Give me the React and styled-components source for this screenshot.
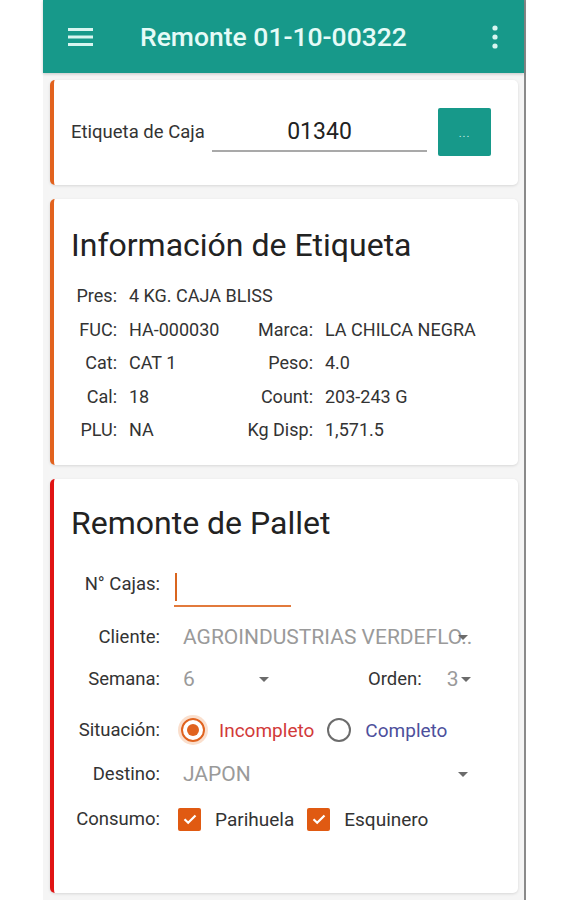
import React from 'react'
import styled, { createGlobalStyle } from 'styled-components'

const GlobalStyle = createGlobalStyle`
  html, body {
    margin: 0;
    padding: 0;
    background: #ffffff;
  }
  body {
    font-family: Roboto, "Noto Sans", "Liberation Sans", sans-serif;
    color: #333;
  }
`

// layout
const Page = styled.div`
  display: flex;
  width: 568px;
  height: 900px;
  overflow: hidden;
`

const Phone = styled.div`
  margin-left: 43px;
  width: 481px;
  border-right: 2px solid #8a8a8a;
  background: #f5f5f5;
  display: flex;
  flex-direction: column;
`

// app bar
const AppBar = styled.header`
  height: 73px;
  flex-shrink: 0;
  background: #17998a;
  display: flex;
  align-items: center;
  padding: 0 6px 0 25px;
  box-shadow: 0 1px 3px rgba(0, 0, 0, 0.2);
  color: #e6fbf7;
`

const Title = styled.h1`
  flex: 1;
  margin: 0 0 0 47px;
  font-size: 26.5px;
  font-weight: 500;
`

const IconBtn = styled.div`
  width: ${p => p.w}px;
  display: flex;
  align-items: center;
  justify-content: center;
`

const Content = styled.main`
  display: flex;
  flex-direction: column;
  gap: 14px;
  padding: 7px 6px 0 7px;
`

const Card = styled.section`
  position: relative;
  background: #fff;
  border-radius: 5px;
  box-shadow: 0 1px 3px rgba(0, 0, 0, 0.12);
  border-left: 4px solid ${p => p.accent};
  padding: ${p => p.pad};
  min-height: ${p => p.minH || 0}px;
  box-sizing: border-box;
`

const CardTitle = styled.h2`
  margin: 0;
  font-size: 32px;
  font-weight: 400;
  color: #222;
`

// card 1
const TagRow = styled.div`
  display: flex;
  align-items: center;
`

const TagLabel = styled.span`
  font-size: 18.5px;
  color: #333;
  width: 141px;
  white-space: nowrap;
`

const TagInput = styled.div`
  width: 215px;
  height: 40px;
  border-bottom: 2px solid #a9a9a9;
  display: flex;
  align-items: center;
  justify-content: center;
  font-size: 23px;
  color: #222;
  box-sizing: border-box;
`

const SquareButton = styled.button`
  margin-left: 11px;
  width: 53px;
  height: 48px;
  border: none;
  border-radius: 2px;
  background: #17998a;
  color: #cdeee9;
  font-size: 11px;
  font-family: inherit;
  letter-spacing: 1px;
  padding-top: 4px;
`

// card 2
const InfoGrid = styled.div`
  display: grid;
  grid-template-columns: 46px 96px 76px auto;
  column-gap: 12px;
  margin-top: 22px;
  font-size: 18px;
  color: #333;
`

const InfoLabel = styled.span`
  text-align: right;
  height: 33.5px;
  line-height: 20px;
  white-space: nowrap;
`

const InfoValue = styled.span`
  white-space: nowrap;
  line-height: 20px;
  grid-column: ${p => (p.wide ? '2 / -1' : 'auto')};
`

// card 3
const Form = styled.div`
  display: flex;
  flex-direction: column;
  margin-top: 27px;
`

const FormRow = styled.div`
  display: flex;
  align-items: center;
  height: ${p => p.h || 30}px;
  margin-top: ${p => p.mt || 0}px;
`

const FormLabel = styled.span`
  width: 90px;
  flex-shrink: 0;
  text-align: right;
  font-size: 18.5px;
  color: #333;
  margin: 0 14px ${p => p.lift || 0}px -1px;
  white-space: nowrap;
`

const CountInput = styled.div`
  position: relative;
  width: 117px;
  height: 36px;
  border-bottom: 2px solid #e27a3c;
`

const Caret = styled.span`
  position: absolute;
  left: 1px;
  top: 4px;
  width: 2px;
  height: 28px;
  background: #d9651f;
`

const Spinner = styled.div`
  position: relative;
  width: ${p => p.w}px;
  flex-shrink: 0;
  display: flex;
  align-items: center;
  padding-left: 9px;
  box-sizing: border-box;
  font-size: 21px;
  color: #9a9a9a;
  white-space: nowrap;
`

const Arrow = styled.span`
  position: absolute;
  right: ${p => p.r}px;
  top: 50%;
  margin-top: -2px;
  width: 0;
  height: 0;
  border-left: 5px solid transparent;
  border-right: 5px solid transparent;
  border-top: 5px solid #6b6b6b;
`

const SideLabel = styled.span`
  font-size: 18.5px;
  color: #333;
  margin: 0 16px 0 94px;
  white-space: nowrap;
`

const RadioCircle = styled.span`
  width: 24px;
  height: 24px;
  flex-shrink: 0;
  box-sizing: border-box;
  border-radius: 50%;
  border: 2px solid ${p => (p.on ? '#e0631f' : '#6c6c6c')};
  display: flex;
  align-items: center;
  justify-content: center;
  margin: 0 14px 0 ${p => p.ml}px;
  box-shadow: ${p => (p.on ? '0 0 0 3px rgba(240, 150, 90, 0.3)' : 'none')};

  &::after {
    content: '';
    display: ${p => (p.on ? 'block' : 'none')};
    width: 12px;
    height: 12px;
    border-radius: 50%;
    background: #e0631f;
  }
`

const OptionText = styled.span`
  font-size: 19px;
  color: ${p => p.color || '#333'};
  white-space: nowrap;
`

const CheckBox = styled.span`
  width: 23px;
  height: 23px;
  flex-shrink: 0;
  border-radius: 2px;
  background: #e05a12;
  display: flex;
  align-items: center;
  justify-content: center;
  margin: 0 14px 0 ${p => p.ml}px;
`

function Check({ ml }) {
  return (
    <CheckBox ml={ml}>
      <svg width="16" height="16" viewBox="0 0 16 16">
        <path d="M2.5 8.2 L6.2 11.8 L13.5 4.5" fill="none" stroke="#fff" strokeWidth="2.2" />
      </svg>
    </CheckBox>
  )
}

const info = [
  ['Pres:', '4 KG. CAJA BLISS'],
  ['FUC:', 'HA-000030', 'Marca:', 'LA CHILCA NEGRA'],
  ['Cat:', 'CAT 1', 'Peso:', '4.0'],
  ['Cal:', '18', 'Count:', '203-243 G'],
  ['PLU:', 'NA', 'Kg Disp:', '1,571.5'],
]

export default function App() {
  return (
    <Page>
      <GlobalStyle />
      <Phone>
        <AppBar>
          <IconBtn w={25}>
            <svg width="25" height="18" viewBox="0 0 25 18">
              <rect x="0" y="0" width="25" height="3" fill="#d8f5f0" />
              <rect x="0" y="7.5" width="25" height="3" fill="#d8f5f0" />
              <rect x="0" y="15" width="25" height="3" fill="#d8f5f0" />
            </svg>
          </IconBtn>
          <Title>Remonte 01-10-00322</Title>
          <IconBtn w={46}>
            <svg width="6" height="24" viewBox="0 0 6 24">
              <circle cx="3" cy="3" r="2.6" fill="#d8f5f0" />
              <circle cx="3" cy="12" r="2.6" fill="#d8f5f0" />
              <circle cx="3" cy="21" r="2.6" fill="#d8f5f0" />
            </svg>
          </IconBtn>
        </AppBar>

        <Content>
          <Card accent="#e2621e" pad="28px 0 0 17px" minH={105}>
            <TagRow>
              <TagLabel>Etiqueta de Caja</TagLabel>
              <TagInput>01340</TagInput>
              <SquareButton>...</SquareButton>
            </TagRow>
          </Card>

          <Card accent="#e2621e" pad="27px 0 0 17px" minH={266}>
            <CardTitle>Información de Etiqueta</CardTitle>
            <InfoGrid>
              {info.map(([l1, v1, l2, v2]) => (
                <React.Fragment key={l1}>
                  <InfoLabel>{l1}</InfoLabel>
                  <InfoValue wide={!l2}>{v1}</InfoValue>
                  {l2 && <InfoLabel>{l2}</InfoLabel>}
                  {l2 && <InfoValue>{v2}</InfoValue>}
                </React.Fragment>
              ))}
            </InfoGrid>
          </Card>

          <Card accent="#e01414" pad="25px 0 0 17px" minH={414}>
            <CardTitle>Remonte de Pallet</CardTitle>
            <Form>
              <FormRow h={38}>
                <FormLabel lift={8}>N° Cajas:</FormLabel>
                <CountInput>
                  <Caret />
                </CountInput>
              </FormRow>
              <FormRow mt={15}>
                <FormLabel>Cliente:</FormLabel>
                <Spinner w={306}>
                  AGROINDUSTRIAS VERDEFLO..
                  <Arrow r={12} />
                </Spinner>
              </FormRow>
              <FormRow mt={12}>
                <FormLabel>Semana:</FormLabel>
                <Spinner w={100}>
                  6
                  <Arrow r={5} />
                </Spinner>
                <SideLabel>Orden:</SideLabel>
                <Spinner w={40}>
                  3
                  <Arrow r={7} />
                </Spinner>
              </FormRow>
              <FormRow mt={21}>
                <FormLabel>Situación:</FormLabel>
                <RadioCircle on ml={7} />
                <OptionText color="#d23a3a">Incompleto</OptionText>
                <RadioCircle ml={13} />
                <OptionText color="#4d4f9c">Completo</OptionText>
              </FormRow>
              <FormRow mt={14}>
                <FormLabel>Destino:</FormLabel>
                <Spinner w={306}>
                  JAPON
                  <Arrow r={12} />
                </Spinner>
              </FormRow>
              <FormRow mt={15}>
                <FormLabel>Consumo:</FormLabel>
                <Check ml={4} />
                <OptionText>Parihuela</OptionText>
                <Check ml={13} />
                <OptionText>Esquinero</OptionText>
              </FormRow>
            </Form>
          </Card>
        </Content>
      </Phone>
    </Page>
  )
}
